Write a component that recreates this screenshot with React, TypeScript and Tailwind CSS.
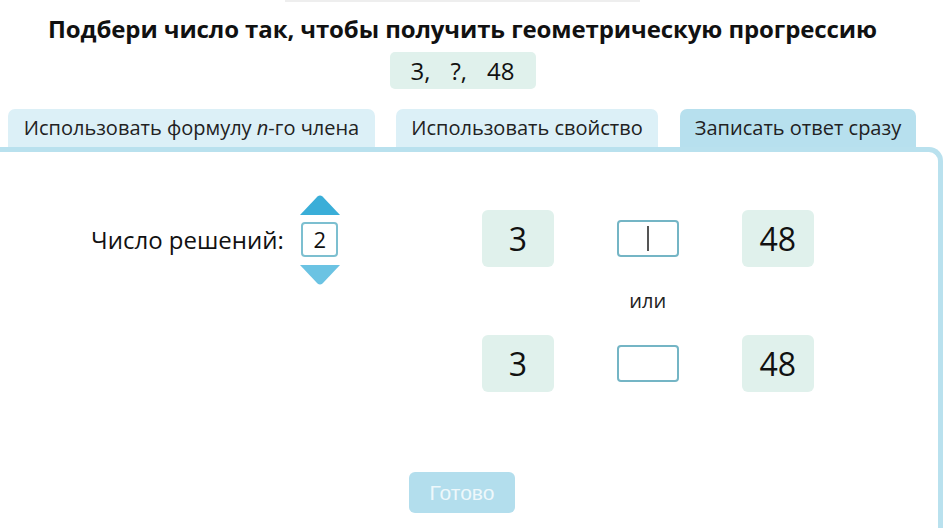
import React from 'react';

const tabs = [
  { label: 'formula', w: 'w-[367px]', active: false },
  { label: 'Использовать свойство', w: 'w-[262px]', active: false },
  { label: 'Записать ответ сразу', w: 'w-[236px]', active: true },
];

function Cell({ value }: { value: string }) {
  return (
    <div className="flex h-[57px] w-[72px] items-center justify-center rounded-[6px] bg-[#e0f1ec] text-[32px] text-[#111]">
      {value}
    </div>
  );
}

function Input({ focused }: { focused?: boolean }) {
  return (
    <div className="flex h-[57px] items-center justify-center">
      <div className="flex h-[37px] w-[62px] items-center justify-center rounded-[4px] border-2 border-[#74b5c5] bg-white">
        {focused && <div className="h-[25px] w-[2px] bg-[#555]" />}
      </div>
    </div>
  );
}

export default function App() {
  return (
    <div className="h-[528px] w-[947px] overflow-hidden bg-white font-['Open_Sans',sans-serif] text-[#111]">
      {/* полоска сверху */}
      <div className="ml-[285px] h-[2px] w-[355px] bg-[#eeeeee]" />

      <div className="w-[925px]">
        <h1 className="mt-[11px] text-center text-[24px] font-bold leading-[31px] tracking-[-0.1px]">
          Подбери число так, чтобы получить геометрическую прогрессию
        </h1>

        <div className="mx-auto mt-[8px] flex h-[37px] w-[146px] items-center justify-center gap-[20px] rounded-[5px] bg-[#e0f1ec] text-[24px]">
          <span>3,</span>
          <span>?,</span>
          <span>48</span>
        </div>
      </div>

      <div className="-ml-[19px] mt-[20px] w-[962px]">
        {/* вкладки */}
        <div className="flex h-[38px] items-stretch gap-[21px] pl-[27px]">
          {tabs.map((t, i) => (
            <div
              key={i}
              className={`${t.w} flex items-center justify-center rounded-t-[7px] text-[20px] text-[#222] ${
                t.active ? 'bg-[#b7e0ee]' : 'bg-[#dcf0f7]'
              } ${i === 2 ? 'ml-px' : ''}`}
            >
              {i === 0 ? (
                <span>
                  Использовать формулу <i>n</i>-го члена
                </span>
              ) : (
                t.label
              )}
            </div>
          ))}
        </div>

        {/* панель */}
        <div className="h-[400px] rounded-tr-[14px] border-r-[5px] border-t-[5px] border-[#b9e1ee]">
          <div className="flex pt-[43px]">
            <div className="ml-[110px] flex h-[90px] items-center gap-[16px]">
              <span className="text-[24px] text-[#111]">Число решений:</span>
              <div className="flex flex-col items-center">
                <svg width="40" height="20" viewBox="0 0 40 20">
                  <path d="M17.5 1.5 Q20 -0.5 22.5 1.5 L40 20 L0 20 Z" fill="#3aaed8" />
                </svg>
                <div className="mt-[7px] flex h-[35px] w-[37px] items-center justify-center rounded-[4px] border-2 border-[#7cbfd0] bg-white text-[22px]">
                  2
                </div>
                <svg className="mt-[8px]" width="40" height="20" viewBox="0 0 40 20">
                  <path d="M0 0 L40 0 L22.5 18.5 Q20 20.5 17.5 18.5 Z" fill="#6bc3e3" />
                </svg>
              </div>
            </div>

            <div className="ml-[142px] mt-[15px] grid grid-cols-[72px_62px_72px] gap-x-[63px]">
              <Cell value="3" />
              <Input focused />
              <Cell value="48" />
              <div />
              <div className="flex h-[68px] items-center justify-center text-[20px] text-[#222]">или</div>
              <div />
              <Cell value="3" />
              <Input />
              <Cell value="48" />
            </div>
          </div>

          <button className="ml-[428px] mt-[80px] flex h-[41px] w-[106px] items-center justify-center rounded-[6px] bg-[#b3deed] font-['Liberation_Sans',sans-serif] text-[21px] text-[#eef8fb]">
            Готово
          </button>
        </div>
      </div>
    </div>
  );
}
